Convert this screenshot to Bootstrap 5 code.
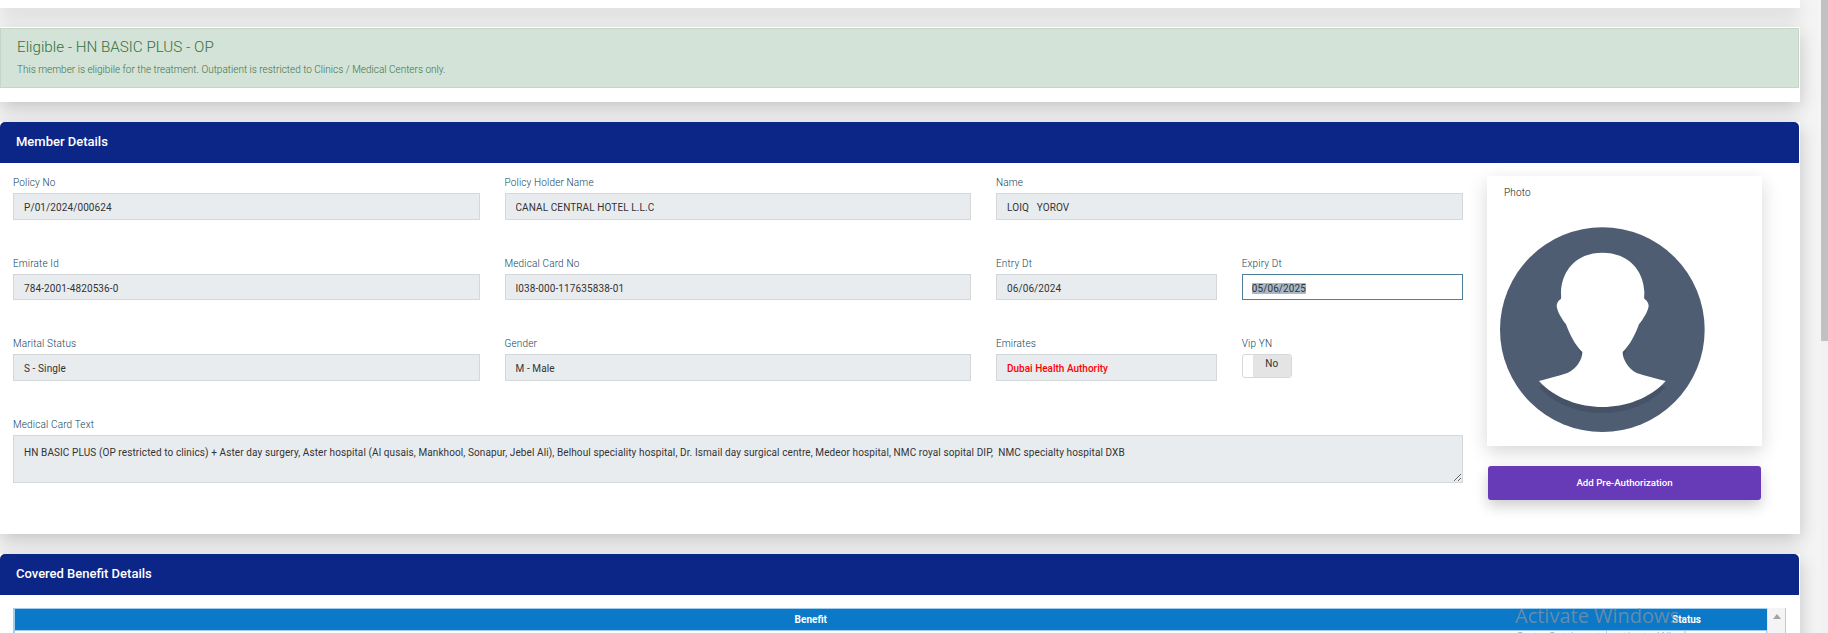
<!DOCTYPE html>
<html lang="en">
<head>
<meta charset="utf-8">
<title>Member Details</title>
<link rel="stylesheet" href="https://cdn.jsdelivr.net/npm/bootstrap@5.3.0/dist/css/bootstrap.min.css">
<style>
html,body{height:633px;overflow:hidden}
body{background:#f4f4f4;font-family:Roboto,"Liberation Sans",sans-serif;font-size:10px;color:#333}
.page-wrap{height:633px;overflow:hidden;position:relative}
.page-main{width:1800px;flex:none}
.page-track{width:7px;flex:none;margin-left:21px;background:#f1f1f1}
.page-thumb{height:341px;background:#c1c1c1}
.panel{border:0;border-radius:0;background:#fff;box-shadow:0 6px 18px rgba(0,0,0,.2)}
.panel-stub{height:8px}
.panel-alert{height:75px;margin-top:19px;padding-top:1px}
.alert-eligible{height:60px;width:1799px;margin:0;padding:8px 16px;border-radius:0;background:#d3e3d7;border:1px solid #c3d6c8;color:#4d7f5a}
.alert-title{font-size:15.2px;font-weight:300;line-height:20px;margin:0 0 6px;color:#35703f}
.alert-text{font-size:10px;line-height:14px;margin:0;font-weight:300;color:#3f7049}
.panel-member{margin-top:20px;height:412px}
.panel-benefit{margin-top:20px;height:200px}
.panel-head{width:1799px;height:41px;padding:0 16px;background:#0c2688;color:#fff;font-size:13px;font-weight:500;line-height:40px;border:0;border-radius:2px 2px 0 0}
.member-body{padding:13px 0 0 13px;gap:24.5px}
.field-area{width:1449.5px;flex:none}
.field-row{--bs-gutter-x:25px;--bs-gutter-y:0}
.field-cell{height:80.5px}
.field-label{display:block;height:17px;margin:0;line-height:14px;font-size:10px;font-weight:300;letter-spacing:.15px;color:#123f5a}
.field-input{height:26.5px;padding:3px 10px 0;border:1px solid #d5d8db;border-radius:0;background:#e9ecef;font-size:10px;color:#333;font-weight:400;letter-spacing:.1px;box-shadow:none}
.field-input:focus{background:#e9ecef;border-color:#d5d8db;box-shadow:none}
.field-input.is-focus,.field-input.is-focus:focus{background:#fff;border-color:#4d7f9b;padding-left:9px}
.field-input.is-focus::selection{background:#a9b9c6;color:#333}
.field-input.is-red{color:#f00;font-weight:500;letter-spacing:0}
.field-text{height:48.5px;min-height:0;padding:9px 10px 0;resize:vertical;display:block}
.vip-toggle{width:50px;height:24px;border:1px solid #d8d8d8;border-radius:3px;overflow:hidden;background:#fff}
.vip-knob{width:10px;flex:none}
.vip-off{background:#e4e4e4;font-size:10px;line-height:18px;text-align:center;color:#333}
.side-col{width:275px;flex:none}
.photo-box{height:270px;padding:10px 17px 0 13px;background:#fff;box-shadow:0 6px 18px rgba(0,0,0,.16)}
.photo-name{line-height:14px;font-size:10px;font-weight:300;letter-spacing:.15px;color:#111;padding-left:4px}
.photo-svg{display:block;width:205px;height:205px;margin-top:27px}
.btn-pre{display:block;width:273px;height:34px;margin:20px 0 0 1px;padding:0;border:0;border-radius:3px;background:#673ab7;color:#fff;font-size:9.7px;font-weight:500;box-shadow:0 6px 14px rgba(0,0,0,.2)}
.btn-pre:hover{background:#673ab7;color:#fff}
.benefit-wrap{margin:13px 0 0 13px;width:1773px;border-right:1px solid #c8c8c8}
.benefit-main{flex:1;min-width:0;border:2px solid #9fcdf0;border-width:1px 0 0 2px}
.benefit-table{margin:0;table-layout:fixed;--bs-table-bg:transparent}
.benefit-table th{height:21px;padding:0;background:#0b78c8;color:#fff;font-size:10px;font-weight:700;text-align:center;line-height:21px;border:0;border-bottom:1px solid #9fcdf0}
.benefit-table td{height:20px;padding:0;border:0;border-right:1px solid #9fcdf0}
.col-status{width:160px}
.benefit-scroll{width:18px;flex:none;background:#f4f4f4;border-left:1px solid #e6e6e6}
.scroll-up{width:0;height:0;margin:6px auto 0;border-left:4px solid transparent;border-right:4px solid transparent;border-bottom:5px solid #a3a3a3}
.win-mark{position:absolute;left:1515px;top:603px;color:rgba(140,150,160,.7);font-family:"Open Sans","Liberation Sans",sans-serif;font-size:20px;line-height:26px;pointer-events:none;white-space:nowrap}
.win-sub{font-size:12px;line-height:16px;margin-top:0}
</style>
</head>
<body>
<div class="page-wrap d-flex">
  <div class="page-main">
    <div class="panel panel-stub"></div>
    <div class="panel panel-alert">
      <div class="alert alert-eligible" role="alert">
        <h4 class="alert-title">Eligible - HN BASIC PLUS - OP</h4>
        <p class="alert-text">This member is eligibile for the treatment. Outpatient is restricted to Clinics / Medical Centers only.</p>
      </div>
    </div>
    <div class="card panel panel-member">
      <div class="card-header panel-head">Member Details</div>
      <div class="member-body d-flex">
        <div class="field-area">
          <div class="row field-row">
            <div class="col-4 field-cell"><label class="field-label">Policy No</label><input class="form-control field-input" readonly value="P/01/2024/000624"></div>
            <div class="col-4 field-cell"><label class="field-label">Policy Holder Name</label><input class="form-control field-input" readonly value="CANAL CENTRAL HOTEL L.L.C"></div>
            <div class="col-4 field-cell"><label class="field-label">Name</label><input class="form-control field-input" readonly value="LOIQ   YOROV"></div>
            <div class="col-4 field-cell"><label class="field-label">Emirate Id</label><input class="form-control field-input" readonly value="784-2001-4820536-0"></div>
            <div class="col-4 field-cell"><label class="field-label">Medical Card No</label><input class="form-control field-input" readonly value="I038-000-117635838-01"></div>
            <div class="col-4 field-cell">
              <div class="row field-row">
                <div class="col-6"><label class="field-label">Entry Dt</label><input class="form-control field-input" readonly value="06/06/2024"></div>
                <div class="col-6"><label class="field-label">Expiry Dt</label><input id="expiry" class="form-control field-input is-focus" value="05/06/2025"></div>
              </div>
            </div>
            <div class="col-4 field-cell"><label class="field-label">Marital Status</label><input class="form-control field-input" readonly value="S - Single"></div>
            <div class="col-4 field-cell"><label class="field-label">Gender</label><input class="form-control field-input" readonly value="M - Male"></div>
            <div class="col-4 field-cell">
              <div class="row field-row">
                <div class="col-6"><label class="field-label">Emirates</label><input class="form-control field-input is-red" readonly value="Dubai Health Authority"></div>
                <div class="col-6"><label class="field-label">Vip YN</label>
                  <div class="vip-toggle d-flex"><span class="vip-knob"></span><span class="vip-off flex-grow-1">No</span></div>
                </div>
              </div>
            </div>
            <div class="col-12"><label class="field-label">Medical Card Text</label><textarea class="form-control field-input field-text" readonly>HN BASIC PLUS (OP restricted to clinics) + Aster day surgery, Aster hospital (Al qusais, Mankhool, Sonapur, Jebel Ali), Belhoul speciality hospital, Dr. Ismail day surgical centre, Medeor hospital, NMC royal sopital DIP,  NMC specialty hospital DXB</textarea></div>
          </div>
        </div>
        <div class="side-col">
          <div class="photo-box">
            <div class="photo-name">Photo</div>
            <svg class="photo-svg" viewBox="120 200 615 615" role="img" aria-label="Member photo placeholder">
              <defs><clipPath id="disc"><circle cx="427" cy="508" r="307"/></clipPath></defs>
              <circle cx="427" cy="508" r="307" fill="#4f5d73"/>
              <path clip-path="url(#disc)" fill="#465266" d="M427 295C355 295 310 340 307 413L294 437C294 460 310 480 324 500C335 525 350 560 367 590C365 615 345 640 320 652L237 680C285 735 360 758 427 758C495 758 570 735 617 680L530 652C510 640 490 615 490 590C505 560 520 525 531 500C545 480 566 460 566 437L553 413C550 340 500 295 427 295Z"/>
              <path fill="#fff" d="M427 277C355 277 306 325 303 395C303 405 304 412 303 415C295 420 290 428 290 437C292 455 305 475 318 492C328 520 345 555 367 575C367 598 350 625 322 638C295 648 262 655 237 662C285 715 360 740 427 740C495 740 570 715 617 662C590 655 558 648 530 638C505 625 488 598 488 575C510 555 527 520 537 492C550 475 564 455 566 437C566 428 561 420 553 415C552 412 553 405 553 395C550 325 500 277 427 277Z"/>
            </svg>
          </div>
          <button type="button" class="btn btn-pre">Add Pre-Authorization</button>
        </div>
      </div>
    </div>
    <div class="card panel panel-benefit">
      <div class="card-header panel-head">Covered Benefit Details</div>
      <div class="benefit-wrap d-flex">
        <div class="benefit-main">
          <table class="table benefit-table">
            <thead><tr><th>Benefit</th><th class="col-status">Status</th></tr></thead>
            <tbody><tr><td></td><td></td></tr></tbody>
          </table>
        </div>
        <div class="benefit-scroll"><div class="scroll-up"></div></div>
      </div>
    </div>
  </div>
  <div class="page-track"><div class="page-thumb"></div></div>
  <div class="win-mark">Activate Windows<div class="win-sub">Go to Settings to activate Windows.</div></div>
</div>
<script src="https://cdn.jsdelivr.net/npm/bootstrap@5.3.0/dist/js/bootstrap.bundle.min.js"></script>
<script>
var e=document.getElementById('expiry');e.focus();e.select();
</script>
</body>
</html>
